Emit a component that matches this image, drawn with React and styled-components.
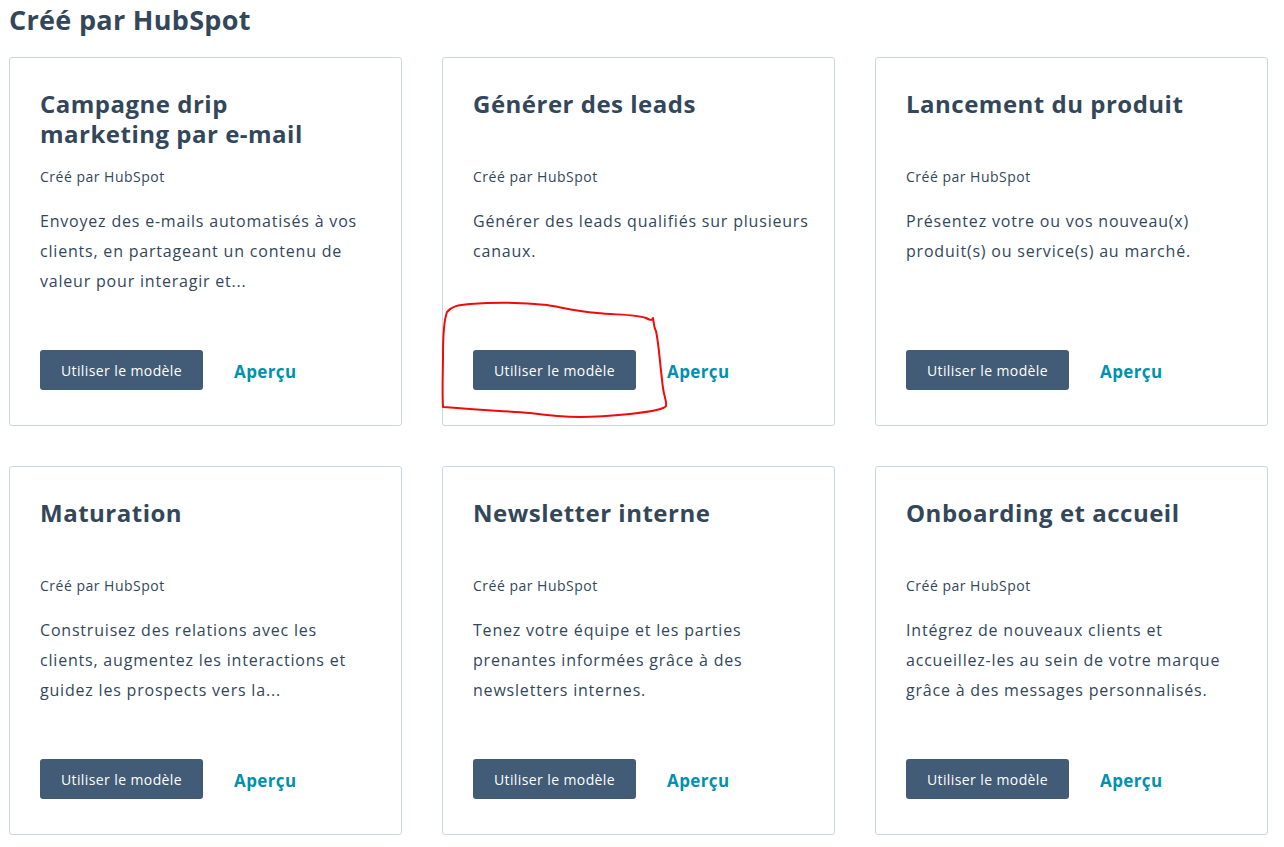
import React from "react";
import styled, { createGlobalStyle } from "styled-components";

const GlobalStyle = createGlobalStyle`
  body {
    margin: 0;
    background: #ffffff;
    font-family: "Open Sans", "Liberation Sans", sans-serif;
    color: #33475b;
  }
`;

const Page = styled.div`
  position: relative;
  padding: 2px 16px 0 9px;
`;

const PageTitle = styled.h1`
  margin: 0 0 19px;
  font-size: 27px;
  line-height: 36px;
  font-weight: 700;
  letter-spacing: 0.3px;
  color: #33475b;
`;

const Grid = styled.div`
  display: grid;
  grid-template-columns: repeat(3, 393px);
  gap: 40px;
`;

const Card = styled.div`
  position: relative;
  box-sizing: border-box;
  height: 369px;
  display: flex;
  flex-direction: column;
  padding: 31px 24px 35px 30px;
  border: 1px solid #cbd6e2;
  border-radius: 3px;
  background: #ffffff;
`;

const CardTitle = styled.h2`
  margin: 0;
  max-width: 300px;
  min-height: 60px;
  font-size: 24px;
  line-height: 30px;
  font-weight: 700;
  letter-spacing: 0.5px;
  color: #33475b;
`;

const Author = styled.div`
  margin-top: 18px;
  font-size: 14px;
  line-height: 20px;
  letter-spacing: 0.5px;
  color: #33475b;
`;

const Description = styled.p`
  margin: 19px 0 0;
  font-size: 16px;
  line-height: 30px;
  letter-spacing: 0.8px;
  color: #33475b;
`;

const Actions = styled.div`
  margin-top: auto;
  display: flex;
  align-items: center;
  gap: 31px;
`;

const PrimaryButton = styled.button`
  width: 163px;
  height: 40px;
  border: none;
  border-radius: 3px;
  background: #425b76;
  color: #ffffff;
  font-family: inherit;
  font-size: 14px;
  letter-spacing: 0.4px;
  cursor: pointer;
`;

const LinkButton = styled.a`
  font-size: 17px;
  font-weight: 700;
  letter-spacing: 0.4px;
  color: #0091ae;
  text-decoration: none;
  cursor: pointer;
  padding-top: 2px;
`;

const Scribble = styled.svg`
  position: absolute;
  left: -1px;
  top: -1px;
  overflow: visible;
  pointer-events: none;
`;

const templates = [
  {
    title: "Campagne drip marketing par e-mail",
    text: "Envoyez des e-mails automatisés à vos clients, en partageant un contenu de valeur pour interagir et..."
  },
  {
    title: "Générer des leads",
    text: "Générer des leads qualifiés sur plusieurs canaux.",
    marked: true
  },
  {
    title: "Lancement du produit",
    text: "Présentez votre ou vos nouveau(x) produit(s) ou service(s) au marché."
  },
  {
    title: "Maturation",
    text: "Construisez des relations avec les clients, augmentez les interactions et guidez les prospects vers la..."
  },
  {
    title: "Newsletter interne",
    text: "Tenez votre équipe et les parties prenantes informées grâce à des newsletters internes."
  },
  {
    title: "Onboarding et accueil",
    text: "Intégrez de nouveaux clients et accueillez-les au sein de votre marque grâce à des messages personnalisés."
  }
];

// hand-drawn red circle around the button of the second card
function RedMark() {
  return (
    <Scribble width="240" height="130">
      <path
        transform="translate(-442 -57)"
        d="M447 312 C 452 306 458 305 470 304 C 495 302 520 302 547 305
           C 560 307 575 311 597 313 C 615 315 635 314 646 318
           C 650 320 652 321 653 318 C 654 324 654 328 656 331
           C 659 345 660 365 663 388 C 664 396 667 402 666 406
           C 664 409 655 411 630 414 C 610 416 600 417 580 417
           C 560 417 545 415 530 413 C 505 411 480 410 443 407
           C 442 390 443 372 443 355 C 443 335 444 320 447 312 Z"
        fill="none"
        stroke="#f20a0a"
        strokeWidth="2"
        strokeLinejoin="round"
      />
    </Scribble>
  );
}

export default function App() {
  return (
    <Page>
      <GlobalStyle />
      <PageTitle>Créé par HubSpot</PageTitle>
      <Grid>
        {templates.map(item => (
          <Card key={item.title}>
            <CardTitle>{item.title}</CardTitle>
            <Author>Créé par HubSpot</Author>
            <Description>{item.text}</Description>
            <Actions>
              <PrimaryButton>Utiliser le modèle</PrimaryButton>
              <LinkButton>Aperçu</LinkButton>
            </Actions>
            {item.marked && <RedMark />}
          </Card>
        ))}
      </Grid>
    </Page>
  );
}
